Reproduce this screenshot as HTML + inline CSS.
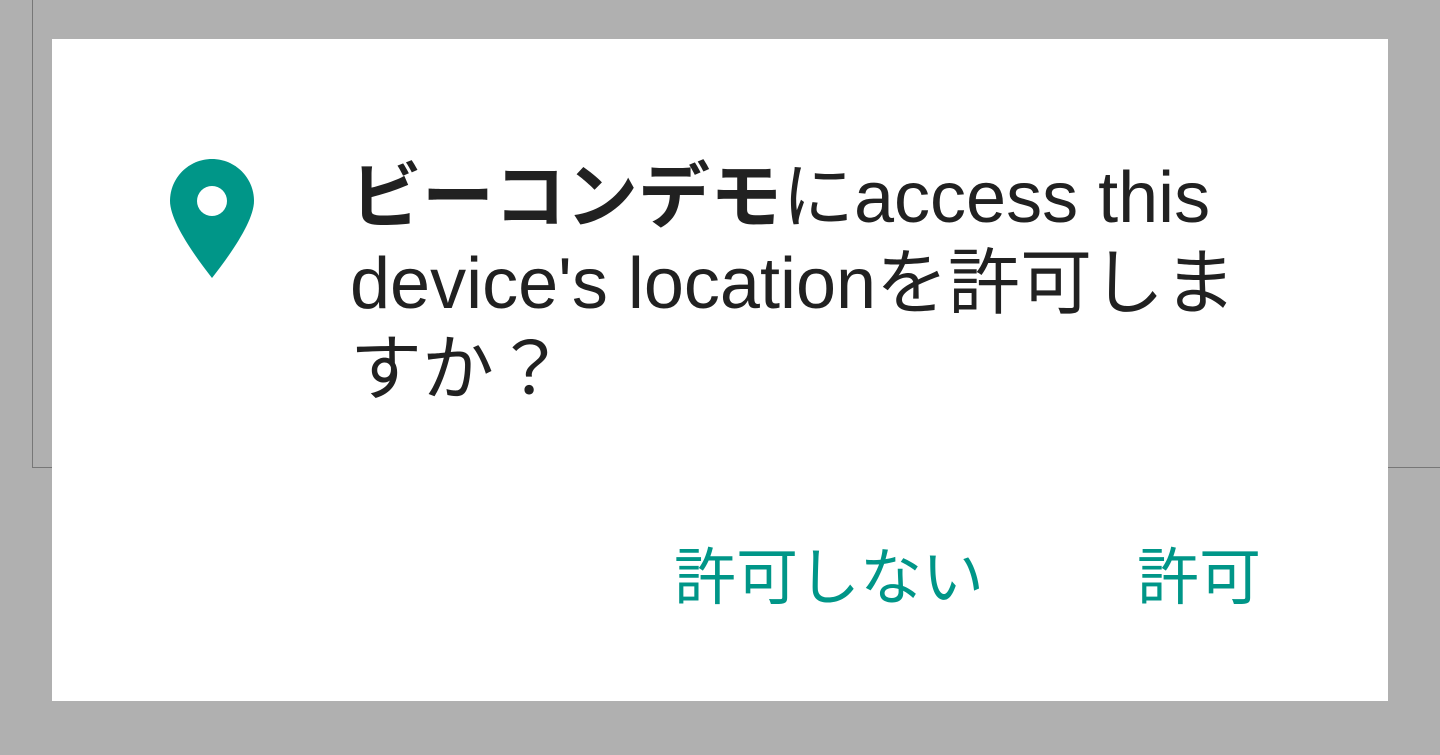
<!DOCTYPE html>
<html><head><meta charset="utf-8"><style>
body{margin:0;width:1440px;height:755px;background:#b0b0b0;position:relative;overflow:hidden;font-family:"Liberation Sans","Noto Sans CJK JP",sans-serif}
.vl{position:absolute;left:32px;top:0;width:1px;height:467px;background:#777}
.hl{position:absolute;left:32px;top:467px;width:1408px;height:1px;background:#777}
.dlg{position:absolute;left:52px;top:39px;width:1336px;height:662px;background:#fff}
.t{position:absolute;left:350px;top:155px;font-size:72px;line-height:86px;color:#212121;white-space:nowrap}
.b{position:absolute;top:548px;font-size:62px;line-height:62px;color:#009688;white-space:nowrap}
</style></head><body>
<div class="vl"></div><div class="hl"></div>
<div class="dlg"></div>
<svg style="position:absolute;left:170px;top:159px" width="84" height="120" viewBox="0 0 84 120">
<path d="M42 0C18.8 0 0 18.8 0 42C0 62 24 96 42 119C60 96 84 62 84 42C84 18.8 65.2 0 42 0Z" fill="#009688"/>
<circle cx="42" cy="42" r="15" fill="#fff"/>
</svg>
<div class="t"><b>ビーコンデモ</b>にaccess this<br>device's locationを許可しま<br>すか？</div>
<div class="b" style="left:674px">許可しない</div>
<div class="b" style="left:1137px">許可</div>
</body></html>
